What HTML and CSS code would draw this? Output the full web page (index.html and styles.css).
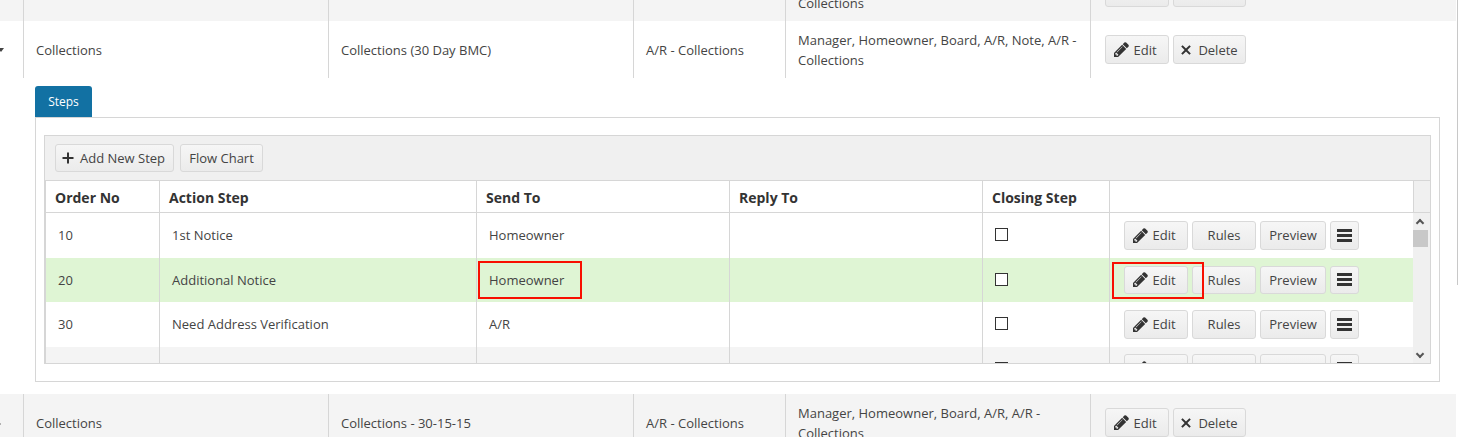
FILE: index.html
```html
<!DOCTYPE html>
<html lang="en">
<head>
    <meta charset="UTF-8">
    <title>Collections Steps</title>
    <link rel="stylesheet" href="styles.css">
</head>
<body>
    <svg class="icon-defs" width="0" height="0">
        <symbol id="pencil" viewBox="128 128 1536 1536"><path d="M491 1536l91-91-235-235-91 91v107h128v128h107zm523-928q0-22-22-22-10 0-17 7l-542 542q-7 7-7 17 0 22 22 22 10 0 17-7l542-542q7-7 7-17zm-54-192l416 416-832 832h-416v-416zm683 96q0 53-37 90l-166 166-416-416 166-165q36-38 90-38 53 0 91 38l235 234q37 39 37 91z"/></symbol>
        <symbol id="times" viewBox="0 0 12 12"><path d="M1.2 2.6L2.6 1.2 6 4.6 9.4 1.2 10.8 2.6 7.4 6 10.8 9.4 9.4 10.8 6 7.4 2.6 10.8 1.2 9.4 4.6 6z"/></symbol>
        <symbol id="plus" viewBox="0 0 12 12"><path d="M5 0.5h2v4.5h4.5v2H7v4.5H5V7H0.5V5H5z"/></symbol>
    </svg>

    <div class="page">
        <div class="row row-alt">
            <div class="cell cell-arrow"></div>
            <div class="cell"></div>
            <div class="cell"></div>
            <div class="cell"></div>
            <div class="cell">Manager, Homeowner, Board, A/R, Note, A/R - Collections</div>
            <div class="cell cell-actions">
                <button class="btn btn-edit"><svg class="icon"><use href="#pencil"/></svg>Edit</button>
                <button class="btn btn-delete"><svg class="icon icon-small"><use href="#times"/></svg>Delete</button>
            </div>
        </div>

        <div class="row">
            <div class="cell cell-arrow"><span class="caret-down"></span></div>
            <div class="cell">Collections</div>
            <div class="cell">Collections (30 Day BMC)</div>
            <div class="cell">A/R - Collections</div>
            <div class="cell">Manager, Homeowner, Board, A/R, Note, A/R - Collections</div>
            <div class="cell cell-actions">
                <button class="btn btn-edit"><svg class="icon"><use href="#pencil"/></svg>Edit</button>
                <button class="btn btn-delete"><svg class="icon icon-small"><use href="#times"/></svg>Delete</button>
            </div>
        </div>

        <div class="detail">
            <div class="tab">Steps</div>
            <div class="tab-panel">
                <div class="toolbar">
                    <button class="btn btn-add"><svg class="icon icon-small"><use href="#plus"/></svg>Add New Step</button>
                    <button class="btn btn-flow">Flow Chart</button>
                </div>
                <div class="steps">
                    <div class="steps-head">
                        <div class="head-cell">Order No</div>
                        <div class="head-cell">Action Step</div>
                        <div class="head-cell">Send To</div>
                        <div class="head-cell">Reply To</div>
                        <div class="head-cell">Closing Step</div>
                        <div class="head-cell"></div>
                        <div class="head-cell head-filler"></div>
                    </div>
                    <div class="steps-scroll">
                        <div class="steps-body">
                            <div class="step">
                                <div class="step-cell">10</div>
                                <div class="step-cell">1st Notice</div>
                                <div class="step-cell">Homeowner</div>
                                <div class="step-cell"></div>
                                <div class="step-cell"><span class="checkbox"></span></div>
                                <div class="step-cell step-actions">
                                    <button class="btn btn-edit"><svg class="icon"><use href="#pencil"/></svg>Edit</button>
                                    <button class="btn btn-rules">Rules</button>
                                    <button class="btn btn-preview">Preview</button>
                                    <button class="btn btn-menu"><span class="bars"></span></button>
                                </div>
                            </div>
                            <div class="step step-current">
                                <div class="step-cell">20</div>
                                <div class="step-cell">Additional Notice</div>
                                <div class="step-cell">Homeowner<span class="callout callout-send"></span></div>
                                <div class="step-cell"></div>
                                <div class="step-cell"><span class="checkbox"></span></div>
                                <div class="step-cell step-actions">
                                    <button class="btn btn-edit"><svg class="icon"><use href="#pencil"/></svg>Edit</button>
                                    <button class="btn btn-rules">Rules</button>
                                    <button class="btn btn-preview">Preview</button>
                                    <button class="btn btn-menu"><span class="bars"></span></button>
                                    <span class="callout callout-edit"></span>
                                </div>
                            </div>
                            <div class="step">
                                <div class="step-cell">30</div>
                                <div class="step-cell">Need Address Verification</div>
                                <div class="step-cell">A/R</div>
                                <div class="step-cell"></div>
                                <div class="step-cell"><span class="checkbox"></span></div>
                                <div class="step-cell step-actions">
                                    <button class="btn btn-edit"><svg class="icon"><use href="#pencil"/></svg>Edit</button>
                                    <button class="btn btn-rules">Rules</button>
                                    <button class="btn btn-preview">Preview</button>
                                    <button class="btn btn-menu"><span class="bars"></span></button>
                                </div>
                            </div>
                            <div class="step step-alt">
                                <div class="step-cell"></div>
                                <div class="step-cell"></div>
                                <div class="step-cell"></div>
                                <div class="step-cell"></div>
                                <div class="step-cell"><span class="checkbox"></span></div>
                                <div class="step-cell step-actions">
                                    <button class="btn btn-edit"><svg class="icon"><use href="#pencil"/></svg>Edit</button>
                                    <button class="btn btn-rules">Rules</button>
                                    <button class="btn btn-preview">Preview</button>
                                    <button class="btn btn-menu"><span class="bars"></span></button>
                                </div>
                            </div>
                        </div>
                        <div class="scrollbar">
                            <span class="chevron chevron-up"></span>
                            <span class="thumb"></span>
                            <span class="chevron chevron-down"></span>
                        </div>
                    </div>
                </div>
            </div>
        </div>

        <div class="row row-alt">
            <div class="cell cell-arrow"><span class="caret-right"></span></div>
            <div class="cell">Collections</div>
            <div class="cell">Collections - 30-15-15</div>
            <div class="cell">A/R - Collections</div>
            <div class="cell">Manager, Homeowner, Board, A/R, A/R - Collections</div>
            <div class="cell cell-actions">
                <button class="btn btn-edit"><svg class="icon"><use href="#pencil"/></svg>Edit</button>
                <button class="btn btn-delete"><svg class="icon icon-small"><use href="#times"/></svg>Delete</button>
            </div>
        </div>
    </div>
    <div class="page-thumb"></div>
</body>
</html>
```

FILE: styles.css
```css
html, body {
    height: 437px;
    margin: 0;
    overflow: hidden;
}
body {
    position: relative;
    background: white;
    color: #444;
    font-family: "Open Sans", sans-serif;
    font-size: 13px;
}
.icon-defs {
    position: absolute;
}
.page {
    width: 1456px;
    margin-top: -36px;
}
.row {
    display: grid;
    grid-template-columns: 23px 305px 305px 152px 305px 366px;
    height: 57px;
}
.row-alt {
    background-color: #f4f4f4;
}
.cell {
    display: flex;
    align-items: center;
    box-sizing: border-box;
    padding: 0 12px;
    border-left: 1px solid #d6d6d6;
    line-height: 20px;
}
.cell-arrow {
    position: relative;
    padding: 0;
    border-left: none;
    overflow: hidden;
}
.cell-actions {
    gap: 4px;
    padding-left: 14px;
}
.caret-down {
    position: absolute;
    left: -2px;
    top: 27px;
    border-top: 4px solid #444;
    border-left: 3px solid transparent;
    border-right: 3px solid transparent;
}
.caret-right {
    position: absolute;
    left: -3px;
    top: 27px;
    border-left: 4px solid #444;
    border-top: 3px solid transparent;
    border-bottom: 3px solid transparent;
}
.btn {
    display: inline-flex;
    align-items: center;
    justify-content: center;
    box-sizing: border-box;
    height: 29px;
    padding: 0;
    border: 1px solid #d9d9d9;
    border-radius: 3px;
    background: linear-gradient(#f6f6f6, #ebebeb);
    color: #444;
    font-family: inherit;
    font-size: 13px;
}
.icon {
    flex: none;
    width: 15px;
    height: 15px;
    margin-right: 4px;
    fill: #333;
}
.icon-small {
    width: 12px;
    height: 12px;
    margin-right: 6px;
}
.detail {
    box-sizing: border-box;
    height: 316px;
    padding: 8px 16px 0 35px;
}
.tab {
    box-sizing: border-box;
    width: 57px;
    height: 31px;
    background-color: #1271a3;
    border-radius: 3px 3px 0 0;
    color: white;
    font-size: 12px;
    line-height: 31px;
    text-align: center;
}
.tab-panel {
    box-sizing: border-box;
    width: 1405px;
    height: 265px;
    padding: 17px 8px 0;
    border: 1px solid #d6d6d6;
}
.toolbar {
    display: flex;
    align-items: center;
    gap: 6px;
    box-sizing: border-box;
    height: 45px;
    padding: 0 10px;
    background-color: #f0f0f0;
    border: 1px solid #d6d6d6;
    border-bottom: none;
}
.toolbar .btn {
    height: 28px;
}
.btn-add {
    width: 119px;
    padding-right: 2px;
}
.btn-flow {
    width: 83px;
}
.btn-edit {
    width: 64px;
    padding-right: 3px;
}
.btn-delete {
    width: 73px;
    padding-right: 1px;
}
.steps {
    border: 1px solid #d6d6d6;
    border-left-width: 2px;
}
.steps-head, .step {
    display: grid;
    grid-template-columns: 113px 317px 253px 253px 127px 304px;
}
.steps-head {
    grid-template-columns: 113px 317px 253px 253px 127px 304px 1fr;
    height: 32px;
    border-bottom: 1px solid #d6d6d6;
    box-sizing: border-box;
}
.head-cell {
    display: flex;
    align-items: center;
    box-sizing: border-box;
    padding-top: 2px;
    padding-left: 9px;
    border-left: 1px solid #d6d6d6;
    color: #333;
    font-size: 14px;
    font-weight: 700;
}
.head-cell:first-child, .step-cell:first-child {
    border-left: none;
}
.head-cell:first-child {
    padding-left: 9px;
}
.head-filler {
    background-color: #f0f0f0;
}
.steps-scroll {
    display: flex;
    height: 150px;
    overflow: hidden;
}
.steps-body {
    width: 1367px;
}
.step {
    height: 44.5px;
}
.step-current {
    background-color: #dff5d4;
}
.step-alt {
    background-color: #f4f4f4;
}
.step-cell {
    position: relative;
    display: flex;
    align-items: center;
    box-sizing: border-box;
    padding-left: 12px;
    border-left: 1px solid #d6d6d6;
}
.step-actions {
    gap: 4px;
    padding-left: 14px;
}
.btn-rules {
    width: 64px;
}
.btn-preview {
    width: 66px;
}
.btn-menu {
    width: 29px;
}
.step-current .btn {
    height: 28px;
}
.bars {
    display: block;
    width: 15px;
    height: 3px;
    background-color: #333;
    box-shadow: 0 5px 0 #333, 0 -5px 0 #333;
}
.checkbox {
    box-sizing: border-box;
    width: 13px;
    height: 13px;
    margin-bottom: 1px;
    background: white;
    border: 1px solid #333;
}
.callout {
    position: absolute;
    box-sizing: border-box;
    border: 2px solid #f80f00;
    pointer-events: none;
}
.callout-send {
    left: 1px;
    top: 3px;
    width: 104px;
    height: 38px;
}
.callout-edit {
    left: 2px;
    top: 4px;
    width: 92px;
    height: 37px;
}
.scrollbar {
    position: relative;
    flex: 1;
    background-color: #f0f0f0;
}
.thumb {
    position: absolute;
    left: 0;
    top: 17px;
    width: 15px;
    height: 17px;
    background-color: #c8c8c8;
}
.chevron {
    position: absolute;
    left: 4px;
    width: 6px;
    height: 6px;
    border-left: 2px solid #555;
    border-top: 2px solid #555;
    box-sizing: border-box;
    transform: rotate(45deg);
}
.chevron-up {
    top: 7px;
}
.chevron-down {
    bottom: 6px;
    transform: rotate(225deg);
}
.page-thumb {
    position: absolute;
    top: 0;
    right: 0;
    width: 1px;
    height: 285px;
    background-color: #c8c8c8;
}
```
